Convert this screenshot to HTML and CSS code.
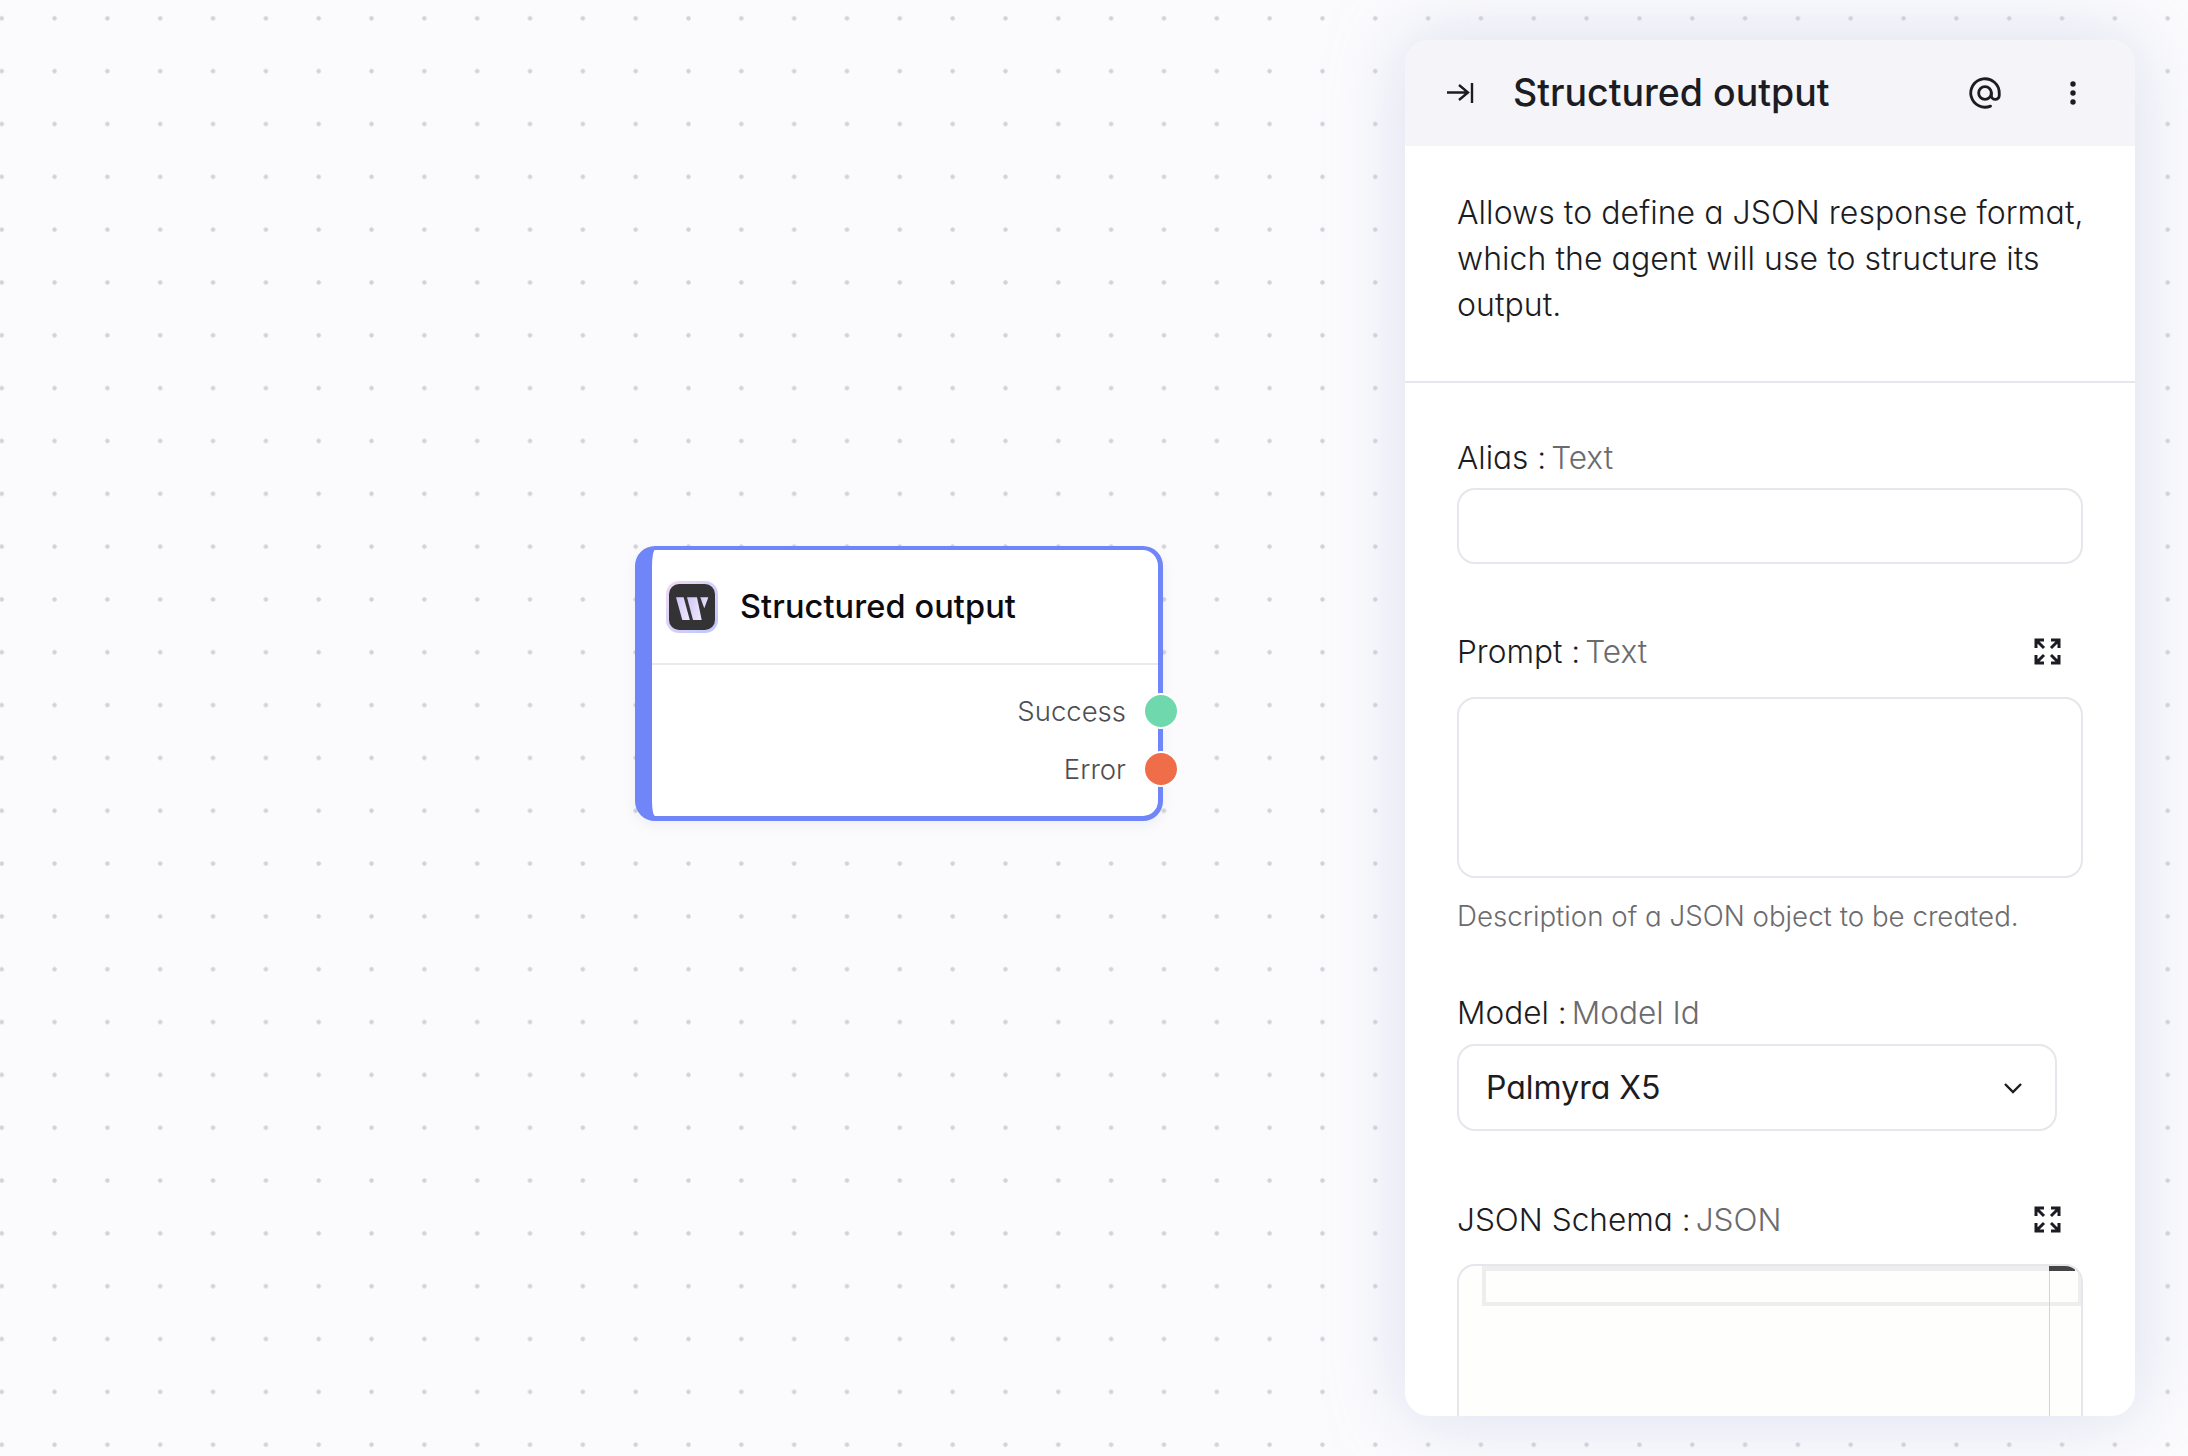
FILE: index.html
```html
<!DOCTYPE html>
<html lang="en">
<head>
<meta charset="utf-8">
<title>Structured output</title>
<link rel="stylesheet" href="styles.css">
</head>
<body>
<main class="canvas">
  <section class="node">
    <header class="node-head">
      <span class="logo">
        <svg viewBox="0 0 52 52" width="52" height="52">
          <defs>
            <linearGradient id="ring" x1="0" y1="0" x2="1" y2="1"><stop offset="0" stop-color="#f3d9f3"/><stop offset="1" stop-color="#bcc6fb"/></linearGradient>
            <linearGradient id="w" x1="0" y1="0" x2="1" y2="0.4"><stop offset="0" stop-color="#cfc6f7"/><stop offset="1" stop-color="#ece2fb"/></linearGradient>
          </defs>
          <rect x="0" y="0" width="52" height="52" rx="13" fill="url(#ring)"/>
          <rect x="3" y="3" width="46" height="46" rx="10" fill="#333335"/>
          <polygon points="10,16.3 17.6,16.3 23.8,39 16.3,39" fill="url(#w)"/>
          <polygon points="21,16.3 31,16.3 35.7,39 27,39" fill="url(#w)"/>
          <polygon points="34.2,16.3 42.3,16.3 38.3,27.3" fill="url(#w)"/>
        </svg>
      </span>
      <span class="node-title">Structured output</span>
    </header>
    <div class="node-ports">
      <div class="port"><span>Success</span><i class="handle handle-ok"></i></div>
      <div class="port"><span>Error</span><i class="handle handle-err"></i></div>
    </div>
  </section>

  <aside class="panel">
    <header class="panel-head">
      <svg class="ico-collapse" viewBox="0 0 28 22" width="28" height="22" fill="none" stroke="#1c1c22" stroke-width="2.4">
        <path d="M1 10.5h21M13 3l9 7.5-9 7.5"/><path d="M26 1v20"/>
      </svg>
      <h1 class="panel-title">Structured output</h1>
      <svg class="ico-at" viewBox="0 0 24 24" width="38" height="38" fill="none" stroke="#1c1c22" stroke-width="1.8" stroke-linecap="round" stroke-linejoin="round">
        <circle cx="12" cy="12" r="4"/><path d="M16 12v1.5a2.5 2.5 0 0 0 5 0v-1.5a9 9 0 1 0-5.5 8.28"/>
      </svg>
      <svg class="ico-more" viewBox="0 0 8 26" width="8" height="26" fill="#1c1c22">
        <circle cx="4" cy="4" r="2.7"/><circle cx="4" cy="13" r="2.7"/><circle cx="4" cy="22" r="2.7"/>
      </svg>
    </header>
    <p class="desc">Allows to define a JSON response format, which the agent will use to structure its output.</p>
    <div class="fields">
      <div class="label-row label-alias"><label class="label">Alias <span class="type"><span class="colon">:</span>Text</span></label></div>
      <div class="input"></div>

      <div class="label-row label-prompt">
        <label class="label">Prompt <span class="type"><span class="colon">:</span>Text</span></label>
        <svg class="ico-expand" viewBox="0 0 27 27" width="27" height="27" fill="none" stroke="#1c1c22" stroke-width="3"><path d="M2 10V2h8M2 2l8 8M17 2h8v8M25 2l-8 8M2 17v8h8M2 25l8-8M25 17v8h-8M25 25l-8-8"/></svg>
      </div>
      <div class="textarea"></div>
      <p class="hint">Description of a JSON object to be created.</p>

      <div class="label-row label-model"><label class="label">Model <span class="type"><span class="colon">:</span>Model Id</span></label></div>
      <div class="select">
        <span>Palmyra X5</span>
        <svg viewBox="0 0 20 12" width="20" height="12" fill="none" stroke="#1c1c22" stroke-width="2.4"><path d="M2 2l8 8 8-8"/></svg>
      </div>

      <div class="label-row label-json">
        <label class="label">JSON Schema <span class="type"><span class="colon">:</span>JSON</span></label>
        <svg class="ico-expand" viewBox="0 0 27 27" width="27" height="27" fill="none" stroke="#1c1c22" stroke-width="3"><path d="M2 10V2h8M2 2l8 8M17 2h8v8M25 2l-8 8M2 17v8h8M2 25l8-8M25 17v8h-8M25 25l-8-8"/></svg>
      </div>
      <div class="editor">
        <div class="editor-line"></div>
        <div class="editor-rule"></div>
        <div class="editor-thumb"></div>
      </div>
    </div>
  </aside>
</main>
</body>
</html>
```

FILE: styles.css
```css
* { box-sizing: border-box; }
html, body { margin: 0; height: 100%; }
body {
  font-family: Inter, "Liberation Sans", sans-serif;
  font-feature-settings: "cv11" 1;
  color: #1c1c22;
  overflow: hidden;
}
.canvas {
  position: relative;
  width: 2188px;
  height: 1456px;
  overflow: hidden;
  background-color: #fbfbfd;
  background-image: radial-gradient(circle at center, #d2d2d7 0, #d2d2d7 1.8px, transparent 2.6px);
  background-size: 52.83px 52.83px;
  background-position: -24.7px -8.1px;
}

/* Node on the free canvas */
.node {
  position: absolute;
  left: 635px;
  top: 546px;
  width: 528px;
  height: 275px;
  background: #fff;
  border: 5px solid #6f85f8;
  border-top-width: 4px;
  border-left-width: 17px;
  border-radius: 20px;
  box-shadow: 0 4px 12px rgba(120, 125, 160, .10);
}
.node-head {
  display: flex;
  align-items: center;
  gap: 22px;
  height: 115px;
  padding-left: 14px;
  border-bottom: 2px solid #e9e9ee;
}
.logo { display: block; width: 52px; height: 52px; flex: none; }
.logo svg { display: block; }
.node-title {
  font-size: 32.5px;
  font-weight: 500;
  color: #0c0c10;
  letter-spacing: .1px;
}
.node-ports {
  display: flex;
  flex-direction: column;
  gap: 26px;
  padding-top: 30px;
}
.port {
  position: relative;
  display: flex;
  justify-content: flex-end;
  height: 32px;
  line-height: 32px;
  padding-right: 32px;
  font-size: 27.5px;
  font-weight: 300;
  color: #4e4e52;
}
.handle {
  position: absolute;
  right: -21px;
  top: 0;
  width: 36px;
  height: 36px;
  margin-top: -2px;
  border-radius: 50%;
  border: 2.5px solid #fff;
}
.handle-ok { background: #6fd9ad; }
.handle-err { background: #f06d4a; }

/* Floating panel */
.panel {
  position: absolute;
  left: 1405px;
  top: 40px;
  width: 730px;
  height: 1376px;
  background: #fff;
  border-radius: 24px;
  overflow: hidden;
  box-shadow: 0 0 70px rgba(196, 202, 230, .6);
}
.panel-head {
  display: flex;
  align-items: center;
  height: 106px;
  padding-left: 41px;
  background: #f4f4f9;
}
.ico-collapse { flex: none; }
.panel-title {
  margin: 0 0 2px 39px;
  flex: 1;
  font-size: 37.5px;
  font-weight: 500;
  color: #1c1c22;
}
.ico-at { flex: none; }
.ico-more { flex: none; margin: 0 58px 0 65px; }
.desc {
  margin: 0;
  padding: 44px 30px 54px 52px;
  height: 237px;
  font-size: 32px;
  font-weight: 300;
  line-height: 46px;
  letter-spacing: .05px;
  border-bottom: 2px solid #e6e6ee;
}
.fields { padding: 51px 52px 0; }
.label-row {
  display: flex;
  align-items: center;
  justify-content: space-between;
  height: 46px;
}
.label { font-size: 31.6px; font-weight: 300; color: #1c1c22; }
.type { color: #6b6b6e; }
.colon { color: #1c1c22; margin-right: 5px; }
.ico-expand { flex: none; margin: 1px 22px 0 0; }
.input {
  height: 76px;
  margin-top: 8px;
  background: #fff;
  border: 2px solid #e6e6ec;
  border-radius: 18px;
}
.label-prompt { margin-top: 64px; }
.textarea {
  height: 181px;
  margin-top: 23px;
  border: 2px solid #e6e6ec;
  border-radius: 18px;
}
.hint {
  margin: 20px 0 0;
  height: 36px;
  line-height: 36px;
  font-size: 27.7px;
  font-weight: 300;
  color: #6b6b6e;
}
.label-model { margin-top: 55px; }
.select {
  display: flex;
  align-items: center;
  justify-content: space-between;
  width: 600px;
  height: 87px;
  margin-top: 9px;
  padding: 0 32px 0 27px;
  border: 2px solid #e6e6ec;
  border-radius: 18px;
  font-size: 32px;
  font-weight: 400;
}
.label-json { margin-top: 65px; }
.editor {
  position: relative;
  height: 260px;
  margin-top: 22px;
  background: #fefefc;
  border: 2px solid #e6e6ec;
  border-bottom: 0;
  border-radius: 18px 18px 0 0;
  overflow: hidden;
}
.editor-line {
  position: absolute;
  left: 23px;
  right: 0;
  top: 0;
  height: 40px;
  border: 4px solid #eeeeef;
  border-top-width: 5px;
  border-right-width: 3px;
}
.editor-rule {
  position: absolute;
  left: 590px;
  top: 0;
  bottom: 0;
  width: 1px;
  background: #d4d4d4;
}
.editor-thumb {
  position: absolute;
  left: 590px;
  right: 6px;
  top: 0;
  height: 5px;
  background: #454545;
}
```
